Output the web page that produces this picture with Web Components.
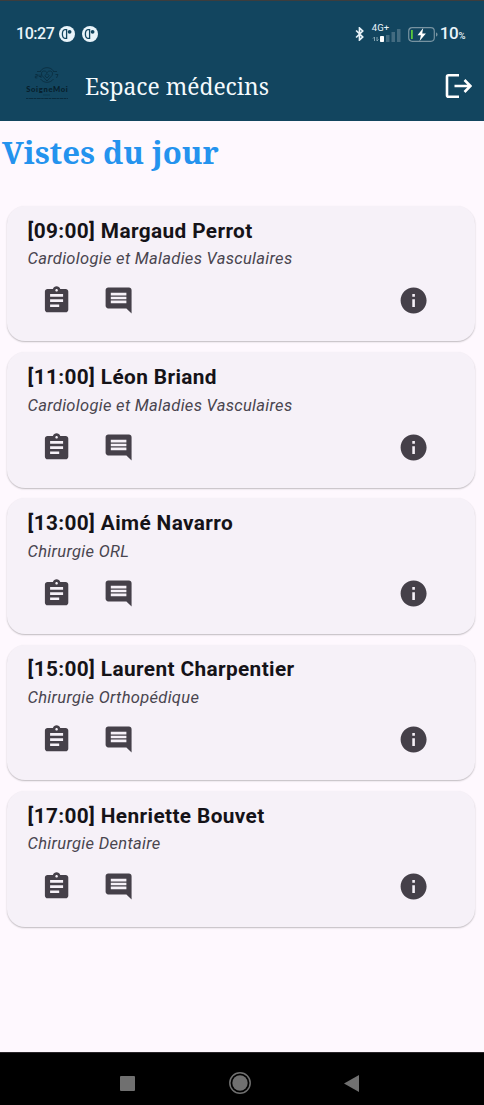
<!DOCTYPE html>
<html lang="fr">
<head>
<meta charset="utf-8">
<title>Espace médecins</title>
<style>
html,body{margin:0;height:100%;background:#fef7ff;overflow:hidden}
</style>
</head>
<body>
<doctor-app></doctor-app>
<script>
const define = (name, html) => customElements.define(name, class extends HTMLElement {
  constructor() {
    super();
    const t = document.createElement('template');
    t.innerHTML = html;
    this.attachShadow({mode: 'open'}).append(t.content.cloneNode(true));
  }
});

define('status-bar', `
<style>
:host{display:flex;align-items:center;height:26px;padding:20px 19px 0 16px;color:#e9f4fa;font:500 16px/26px Roboto,sans-serif}
.time{width:42.500px;white-space:nowrap;letter-spacing:-.45px}
.dot{margin-right:8px}
svg{display:block;flex:none}
.gap{flex:1}
.net{width:29px;height:20px;display:flex;flex-direction:column;margin:-2px 7px 0 8px}
.net span{font:400 9.500px/9px Roboto,sans-serif;height:9px;letter-spacing:0}
.net svg{margin-top:-4px}
.pct{font-size:17px;margin-left:2px;white-space:nowrap;letter-spacing:-.4px}
small{font-size:9.500px}
</style>
<span class="time">10:27</span>
<svg class="dot" width="16" height="16" viewBox="0 0 16 16"><circle cx="8" cy="8" r="8" fill="#e9f4fa"/><path d="M7.600 3.600H6Q3.400 4 3.400 8T6 12.400H7.600z" fill="none" stroke="#12455e" stroke-width="1.300"/><circle cx="10.600" cy="5.800" r="1.900" fill="#12455e"/></svg>
<svg style="margin-left:-1px" width="16" height="16" viewBox="0 0 16 16"><circle cx="8" cy="8" r="8" fill="#e9f4fa"/><path d="M7.600 3.600H6Q3.400 4 3.400 8T6 12.400H7.600z" fill="none" stroke="#12455e" stroke-width="1.300"/><circle cx="10.600" cy="5.800" r="1.900" fill="#12455e"/></svg>
<span class="gap"></span>
<svg width="9" height="14" viewBox="0 0 8 14"><path d="M.6 3.500 7.200 10 4 13V1l3.200 3L.6 10.500" fill="none" stroke="#e9f4fa" stroke-width="1.700"/></svg>
<div class="net"><span>4G+</span>
<svg width="29" height="14" viewBox="0 0 29 14"><path d="M2.500 13V9M1 10.500 2.500 9M5 9v4m1.500-1.500L5 13" fill="none" stroke="#8fabb8" stroke-width=".9"/><rect x="8" y="8" width="4" height="6" rx=".7" fill="#fff"/><path d="M14 7h3.500v7H14zM19.500 4h3.500v10h-3.500zM25 1h3.500v13H25z" fill="#436b80"/></svg></div>
<svg width="30" height="15" viewBox="0 0 30 15"><rect x=".7" y=".7" width="25.600" height="13.600" rx="3.500" fill="none" stroke="#7793a1" stroke-width="1.200"/><path d="M3 3h1.800v9H3z" fill="#5ac83c"/><path d="M28 5.500q1.500 0 1.500 2t-1.500 2z" fill="#7793a1"/><path d="M15.200 1 9.500 8.300h3.400L11.600 14l6.300-7.600h-3.700z" fill="#fff"/></svg>
<span class="pct">10<small>%</small></span>`);

define('brand-logo', `
<style>
:host{display:flex;flex-direction:column;align-items:center;width:44px;height:36px;color:#061e2b}
svg{display:block;flex:none}
b{font:900 7.600px/8px Lato,sans-serif;letter-spacing:.65px;white-space:nowrap;margin:1px -.7px 0 0}
</style>
<svg width="26" height="18" viewBox="0 0 26 18" fill="none" stroke="#0a2c3e" stroke-width=".8"><path d="M6.500 5a8 8 0 0 1 13 0M6.500 13a8 8 0 0 0 13 0M3 5.500h4M19 5.500h4"/><path d="M13 15 8 9.500q-1.600-3.500 1.500-4.500 2.200-.4 3.500 1.700 1.300-2.100 3.500-1.700 3.100 1 1.500 4.500zM13 7.500l2.200 2.200L13 12l-2.200-2.300z"/><path d="M1.300 8.500h2v1.700h-2v1.700h2M5 8.500v2h2m0-2v3.500M21.500 8.500H24l-1.500 3.500"/></svg>
<b>SoigneMoi</b>
<svg width="44" height="9" viewBox="0 0 44 9" stroke="#0a2c3e"><path d="M18 2h7" stroke-width=".5"/><path d="M1 5.500h42" stroke-width="1.100" stroke-dasharray="2.500 .6 4 .5"/></svg>`);

define('app-bar', `
<style>
:host{display:flex;align-items:center;height:70px;padding:4px 12px 0 25px;color:#f4fafd}
h1{flex:1;margin:1px 0 0 16px;font:400 22.800px/32px "Noto Serif","DejaVu Serif",serif;white-space:nowrap}
svg{display:block}
brand-logo{margin-top:-5px}
</style>
<brand-logo></brand-logo><h1><slot></slot></h1>
<svg width="27" height="26" viewBox="0 0 27 26" fill="none" stroke="#fff" stroke-width="2.600"><path d="M14 2.200H3.500q-1.500 0-1.500 1.500v18.600q0 1.500 1.500 1.500H14M9.500 13H25M19.500 7l6 6-6 6"/></svg>`);

define('visit-card', `
<style>
:host{display:block;box-sizing:border-box;height:135.500px;padding:12.700px 21px 0;border-radius:18px;background:#f6f1f8;box-shadow:0 1px 1.500px rgba(0,0,0,.22),0 1px 3px rgba(0,0,0,.04);color:#151318;font-family:Roboto,sans-serif}
.name{display:block;font-weight:700;font-size:20.800px;line-height:25px;letter-spacing:.38px;white-space:nowrap}
.unit{display:block;font-style:italic;font-size:16.500px;line-height:24px;margin-top:3.700px;letter-spacing:.31px;color:#49454f;white-space:nowrap}
.actions{display:flex;align-items:center;margin:14.200px 24px 0 13.800px;color:#49454f}
svg{display:block;width:31.200px;height:31.200px;fill:#454049}
.note{margin-left:30.800px}.info{margin-left:auto}
</style>
<slot class="name" name="name"></slot><slot class="unit" name="unit"></slot>
<div class="actions">
<svg viewBox="0 0 24 24"><path d="M19 3h-4.180C14.400 1.840 13.300 1 12 1c-1.300 0-2.400.84-2.820 2H5c-1.100 0-2 .9-2 2v14c0 1.100.9 2 2 2h14c1.100 0 2-.9 2-2V5c0-1.100-.9-2-2-2zm-7 0c.55 0 1 .45 1 1s-.45 1-1 1-1-.45-1-1 .45-1 1-1zm2 14H7v-2h7v2zm3-4H7v-2h10v2zm0-4H7V7h10v2z"/></svg>
<svg class="note" viewBox="0 0 24 24"><path d="M21.990 4c0-1.100-.89-2-1.990-2H4c-1.100 0-2 .9-2 2v12c0 1.100.9 2 2 2h14l4 4-.01-18zM18 14H6v-2h12v2zm0-3H6V9h12v2zm0-3H6V6h12v2z"/></svg>
<svg class="info" viewBox="0 0 24 24"><path d="M12 2C6.480 2 2 6.480 2 12s4.480 10 10 10 10-4.480 10-10S17.520 2 12 2zm1 15h-2v-6h2v6zm0-8h-2V7h2v2z"/></svg>
</div>`);

define('nav-bar', `
<style>
:host{display:flex;align-items:center;box-sizing:border-box;height:53px;background:#000;border-top:1px solid #292529;padding:8px 125px 0 120px;justify-content:space-between}
svg{display:block}
</style>
<svg width="15" height="15"><rect width="15" height="15" rx="1" fill="#707070"/></svg>
<svg width="22" height="22"><circle cx="11" cy="11" r="10.200" fill="none" stroke="#707070" stroke-width="1.500"/><circle cx="11" cy="11" r="7.700" fill="#707070"/></svg>
<svg width="15" height="17"><path d="M15 0v17L0 8.500z" fill="#707070"/></svg>`);

define('doctor-app', `
<style>
:host{display:flex;flex-direction:column;height:1105px;width:484px;background:#fef8fe}
header{box-sizing:border-box;height:121px;background:#12455f;border-top:1px solid #3d3d3d;flex:none}
main{flex:1;padding-top:14px}
h2{margin:0 0 0 2px;height:70.900px;font:700 31.100px/35px "Noto Serif","DejaVu Serif",serif;color:#2493ee;white-space:nowrap}
.list{display:flex;flex-direction:column;gap:10.800px;padding:0 9.500px 0 6.500px}
</style>
<header><status-bar></status-bar><app-bar>Espace médecins</app-bar></header>
<main><h2>Vistes du jour</h2>
<div class="list">
<visit-card><span slot="name">[09:00] Margaud Perrot</span><span slot="unit">Cardiologie et Maladies Vasculaires</span></visit-card>
<visit-card><span slot="name">[11:00] Léon Briand</span><span slot="unit">Cardiologie et Maladies Vasculaires</span></visit-card>
<visit-card><span slot="name">[13:00] Aimé Navarro</span><span slot="unit">Chirurgie ORL</span></visit-card>
<visit-card><span slot="name">[15:00] Laurent Charpentier</span><span slot="unit">Chirurgie Orthopédique</span></visit-card>
<visit-card><span slot="name">[17:00] Henriette Bouvet</span><span slot="unit">Chirurgie Dentaire</span></visit-card>
</div></main>
<nav-bar></nav-bar>`);
</script>
</body>
</html>
